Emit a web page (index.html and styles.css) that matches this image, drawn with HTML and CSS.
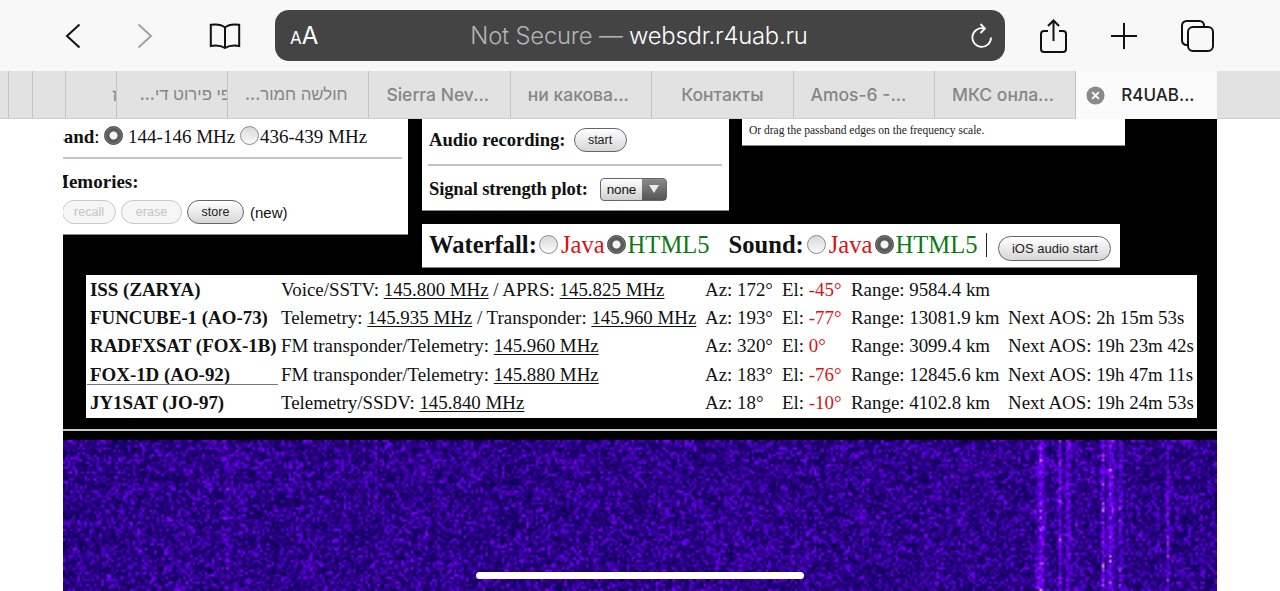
FILE: index.html
```html
<!DOCTYPE html>
<html lang="en">
<head>
  <meta charset="UTF-8">
  <title>websdr.r4uab.ru</title>
  <link rel="stylesheet" href="styles.css">
</head>
<body>
  <header class="toolbar">
    <svg class="icon back" viewBox="0 0 16 26"><path d="M14.5 1.5 2 13l12.5 11.5" /></svg>
    <svg class="icon forward" viewBox="0 0 16 26"><path d="M1.5 1.5 14 13 1.500 24.500" /></svg>
    <svg class="icon book" viewBox="0 0 32 26"><path d="M16 4.500C13 1.800 7 1 1.800 1.800V23c5-.8 10.500-.3 14.200 2 3.700-2.300 9.200-2.800 14.200-2V1.800C25 1 19 1.800 16 4.500ZM16 4.500V25" /></svg>
    <div class="urlbar">
      <span class="aa"><small>A</small>A</span>
      <span class="address"><span class="dim">Not Secure —</span> websdr.r4uab.ru</span>
      <svg class="reload" viewBox="0 0 22 26"><path d="M13 5.500A9.300 9.300 0 1 0 20 14.500M9.500 1 14 5.500 9.500 10" /></svg>
    </div>
    <svg class="icon share" viewBox="0 0 27 34"><path d="M8 12H4a3 3 0 0 0-3 3v15a3 3 0 0 0 3 3h19a3 3 0 0 0 3-3V15a3 3 0 0 0-3-3h-4M13.500 22V1.500M8 7l5.500-5.500L19 7" /></svg>
    <svg class="icon plus" viewBox="0 0 26 26"><path d="M13 0v26M0 13h26" /></svg>
    <svg class="icon tabs-icon" viewBox="0 0 33 32"><rect x="7" y="7" width="25" height="24" rx="5" /><path d="M7 25H5.500A4.500 4.500 0 0 1 1 20.500V5.500A4.500 4.500 0 0 1 5.500 1h13A4.500 4.500 0 0 1 23 5.500V7" /></svg>
  </header>

  <nav class="tabs">
    <div class="tab stub w9"></div>
    <div class="tab stub w24"></div>
    <div class="tab stub w33"></div>
    <div class="tab stub w51 rtl-end"><span class="fragment" lang="he">ז</span></div>
    <div class="tab narrow rtl-end"><span class="he clipped" lang="he" dir="rtl">פי פירוט די...</span></div>
    <div class="tab wide trunc"><span class="he" lang="he" dir="rtl">חולשה חמור...</span></div>
    <div class="tab wide trunc">Sierra Nev...</div>
    <div class="tab wide trunc">ни какова...</div>
    <div class="tab wide">Контакты</div>
    <div class="tab wide trunc">Amos-6 -...</div>
    <div class="tab wide trunc">МКС онла...</div>
    <div class="tab active">
      <svg class="tab-close" viewBox="0 0 20 20"><circle cx="10" cy="10" r="9.500" /><path d="m6.500 6.500 7 7m0-7-7 7" /></svg>
      <span>R4UAB...</span>
    </div>
  </nav>

  <main class="site">
    <div class="top">
      <section class="panel band-panel">
        <div class="band-row">
          <b>Band</b>: <i class="radio on"></i> 144-146 MHz <i class="radio"></i><span class="tight">436-439 MHz</span>
        </div>
        <hr class="rule">
        <div class="mem-title"><b>Memories:</b></div>
        <div class="mem-row">
          <button class="btn off recall">recall</button>
          <button class="btn off erase">erase</button>
          <button class="btn store">store</button>
          <span class="mem-new">(new)</span>
        </div>
      </section>

      <div class="top-right">
        <div class="top-right-row">
          <section class="panel rec-panel">
            <div class="rec-row"><b>Audio recording:</b> <button class="btn start">start</button></div>
            <hr class="rule">
            <div class="rec-row plot"><b>Signal strength plot:</b>
              <span class="select">none<span class="select-arrow"></span></span>
            </div>
          </section>
          <section class="panel hint-panel">Or drag the passband edges on the frequency scale.</section>
        </div>
        <section class="panel engine-bar">
          <b>Waterfall:</b><i class="radio"></i><span class="red">Java</span><i class="radio on"></i><span class="green">HTML5</span>
          <b class="sound">Sound:</b><i class="radio"></i><span class="red">Java</span><i class="radio on"></i><span class="green">HTML5</span>
          <span class="bar-sep"></span>
          <button class="btn ios">iOS audio start</button>
        </section>
      </div>
    </div>

    <div class="sats-box">
      <table class="sats">
        <colgroup>
          <col class="c-name"><col class="c-desc"><col class="c-az"><col class="c-el"><col class="c-range"><col class="c-aos">
        </colgroup>
        <tr>
          <th>ISS (ZARYA)</th>
          <td>Voice/SSTV: <u>145.800 MHz</u> / APRS: <u>145.825 MHz</u></td>
          <td>Az: 172°</td><td>El: <span class="red">-45°</span></td><td>Range: 9584.4 km</td><td></td>
        </tr>
        <tr>
          <th>FUNCUBE-1 (AO-73)</th>
          <td>Telemetry: <u>145.935 MHz</u> / Transponder: <u>145.960 MHz</u></td>
          <td>Az: 193°</td><td>El: <span class="red">-77°</span></td><td>Range: 13081.9 km</td><td>Next AOS: 2h 15m 53s</td>
        </tr>
        <tr>
          <th>RADFXSAT (FOX-1B)</th>
          <td>FM transponder/Telemetry: <u>145.960 MHz</u></td>
          <td>Az: 320°</td><td>El: <span class="red">0°</span></td><td>Range: 3099.4 km</td><td>Next AOS: 19h 23m 42s</td>
        </tr>
        <tr>
          <th class="lined">FOX-1D (AO-92)</th>
          <td>FM transponder/Telemetry: <u>145.880 MHz</u></td>
          <td>Az: 183°</td><td>El: <span class="red">-76°</span></td><td>Range: 12845.6 km</td><td>Next AOS: 19h 47m 11s</td>
        </tr>
        <tr>
          <th>JY1SAT (JO-97)</th>
          <td>Telemetry/SSDV: <u>145.840 MHz</u></td>
          <td>Az: 18°</td><td>El: <span class="red">-10°</span></td><td>Range: 4102.8 km</td><td>Next AOS: 19h 24m 53s</td>
        </tr>
      </table>
    </div>

    <div class="divider"></div>
    <canvas id="waterfall" class="waterfall" width="1154" height="151"></canvas>
  </main>

  <div class="home-indicator"></div>
  <script src="waterfall.js"></script>
</body>
</html>
```

FILE: styles.css
```css
html, body {
  margin: 0;
  height: 591px;
  overflow: hidden;
  background: #fff;
}
body {
  font-family: "Liberation Serif", serif;
  color: #111;
}

/* safari toolbar */
.toolbar {
  height: 71px;
  background: #f8f8f8;
  display: flex;
  align-items: center;
  font-family: Inter, Roboto, "Liberation Sans", sans-serif;
}
.icon {
  flex: none;
  fill: none;
  stroke: #111;
  stroke-width: 2;
}
.back { width: 16px; height: 26px; margin-left: 65px; }
.forward { width: 16px; height: 26px; margin-left: 56px; stroke: #a2a2a2; }
.book { width: 32px; height: 26px; margin-left: 56px; }
.urlbar {
  width: 730px;
  height: 51px;
  margin-left: 34px;
  flex: none;
  box-sizing: border-box;
  padding: 0 12px 0 15px;
  background: #444;
  border-radius: 14px;
  color: #fff;
  display: flex;
  align-items: center;
}
.aa { width: 60px; font-size: 24px; }
.aa small { font-size: 17px; }
.address {
  flex: 1;
  text-align: center;
  font-size: 23.800px;
  font-weight: 300;
  letter-spacing: -0.2px;
  padding-right: 43px;
}
.dim { color: #b4b4b4; }
.reload {
  width: 22px;
  height: 26px;
  fill: none;
  stroke: #fff;
  stroke-width: 1.8;
}
.share { width: 27px; height: 34px; margin-left: 35px; }
.plus { width: 26px; height: 26px; margin-left: 44px; }
.tabs-icon { width: 33px; height: 32px; margin-left: 44px; }

/* tab strip */
.tabs {
  height: 47px;
  background: #e2e2e2;
  border-bottom: 1px solid #cfcfcf;
  display: flex;
  font-family: Inter, Roboto, "Liberation Sans", "DejaVu Sans", sans-serif;
  font-size: 17.500px;
  font-weight: 500;
  color: #868686;
}
.tab {
  flex: none;
  box-sizing: border-box;
  border-right: 1px solid #c4c4c4;
  display: flex;
  align-items: center;
  justify-content: center;
  overflow: hidden;
  white-space: nowrap;
}
.w9 { width: 9px; }
.w24 { width: 24px; }
.w33 { width: 33px; }
.w51 { width: 51px; }
.narrow { width: 111px; }
.wide { width: 141.400px; }
.trunc { justify-content: flex-start; padding-left: 17px; }
.rtl-end { justify-content: flex-end; }
.he { font-size: 16.800px; }
.clipped { margin-right: -4px; }
.fragment { margin-right: -2px; }
.active {
  width: 140.600px;
  height: 48px;
  border-right: 0;
  background: #fbfbfb;
  color: #222;
  font-size: 17px;
  justify-content: flex-start;
  padding-left: 10px;
  gap: 16px;
}
.tab-close { width: 19px; height: 19px; }
.tab-close circle { fill: #8a8a8a; }
.tab-close path { stroke: #fbfbfb; stroke-width: 2; fill: none; }

/* websdr page */
.site {
  width: 1154px;
  height: 472px;
  margin-left: 63px;
  background: #000;
  overflow: hidden;
}
.top { display: flex; height: 149px; }
.panel {
  background: #fff;
  border-bottom: 1px solid #888;
  box-sizing: border-box;
  overflow: hidden;
  font-size: 19px;
  white-space: nowrap;
}
.band-panel { width: 345px; height: 116px; flex: none; }
.band-row { margin: 6px 0 0 -12px; height: 24px; line-height: 24px; }
.tight { margin-left: 1px; }
.rule {
  border: 0;
  height: 2px;
  background: #c4c4c4;
  margin: 0;
}
.band-panel .rule { margin: 8px 6px 0 0; }
.mem-title { margin: 11px 0 0 -12px; line-height: 24px; }
.mem-row {
  display: flex;
  align-items: center;
  gap: 5px;
  margin: 6px 0 0 -1px;
}
.mem-new { font: 15px "Liberation Sans", sans-serif; margin-left: 1px; }

.radio {
  display: inline-block;
  width: 19px;
  height: 19px;
  box-sizing: border-box;
  border-radius: 50%;
  border: 1px solid #8c8c8c;
  background: linear-gradient(#d8d8d8, #fbfbfb);
  vertical-align: -2px;
}
.radio.on {
  border-color: #444;
  background: radial-gradient(circle at 50% 50%, #f4f4f4 0 3.500px, #5a5a5a 4.500px 7px, #777 8px);
}

.btn {
  height: 24px;
  padding: 0;
  border: 1px solid #666;
  border-radius: 12px;
  background: linear-gradient(#fff, #d6d6d6);
  font: 12.500px "Liberation Sans", sans-serif;
  color: #222;
}
.btn.off {
  border-color: #c8c8c8;
  background: #f6f6f6;
  color: #c4c4c4;
}
.recall { width: 54px; }
.erase { width: 61px; }
.store { width: 57px; }
.start { width: 53px; margin-left: 4px; }
.ios { width: 113px; height: 25px; border-radius: 13px; font-size: 13px; flex: none; margin-top: 7px; }

.top-right { margin-left: 14px; width: 703px; }
.top-right-row { display: flex; align-items: flex-start; gap: 13px; height: 105px; }
.rec-panel { width: 307px; height: 92px; flex: none; padding: 0 7px 0 7px; font-size: 18.600px; }
.rec-row { display: flex; align-items: center; gap: 4px; height: 24px; margin-top: 9px; }
.rec-panel .rule { margin: 12px 0 0 -1px; }
.rec-row.plot { margin-top: 11px; gap: 12px; letter-spacing: -0.15px; }
.select {
  position: relative;
  width: 67px;
  height: 23px;
  box-sizing: border-box;
  padding-left: 6px;
  border: 1px solid #666;
  border-radius: 4px;
  background: linear-gradient(#fff, #d0d0d0);
  font: 13.500px/21px "Liberation Sans", sans-serif;
}
.select-arrow {
  position: absolute;
  top: 0;
  right: 0;
  width: 24px;
  height: 21px;
  background: linear-gradient(#8a8a8a, #555);
}
.select-arrow::after {
  content: "";
  position: absolute;
  left: 7px;
  top: 6px;
  border: 5px solid transparent;
  border-top: 8px solid #eee;
  border-bottom: 0;
}
.hint-panel {
  width: 383px;
  height: 27px;
  flex: none;
  padding: 4px 0 0 7px;
  font-size: 11.500px;
  line-height: 14px;
  color: #222;
}
.engine-bar {
  width: 698px;
  height: 44px;
  display: flex;
  align-items: center;
  padding: 0 0 2px 7px;
  font-size: 24.600px;
  line-height: 40px;
}
.engine-bar .radio { margin: 0 3px 0 2px; flex: none; }
.engine-bar .radio.on { margin-right: 2px; }
.sound { margin: 0 1px 0 19px; }
.bar-sep {
  width: 1px;
  height: 24px;
  background: #222;
  margin: 0 11px 0 9px;
  flex: none;
}
.red { color: #e01010; }
.green { color: #0c7a12; }

.sats-box {
  width: 1111px;
  height: 143px;
  margin: 7px 0 0 23px;
  box-sizing: border-box;
  padding-top: 1px;
  background: #fff;
}
.sats {
  width: 100%;
  height: 141px;
  border-collapse: collapse;
  table-layout: fixed;
  font-size: 18.900px;
  white-space: nowrap;
}
.sats th, .sats td { padding: 0; text-align: left; height: 28px; line-height: 28px; }
.sats th { padding-left: 4px; font-weight: bold; }
.sats th.lined { position: relative; }
.sats th.lined::after {
  content: "";
  position: absolute;
  left: 1px;
  width: 191px;
  bottom: 4px;
  height: 1px;
  background: #778;
}
.sats u { text-underline-offset: 2px; }
.c-name { width: 195px; }
.c-desc { width: 424px; }
.c-az { width: 77px; }
.c-el { width: 69px; }
.c-range { width: 157px; }

.divider {
  height: 2px;
  margin-top: 11px;
  background: #c8c8c8;
}
.waterfall { display: block; margin-top: 9px; }

.home-indicator {
  position: absolute;
  left: 476px;
  top: 572px;
  width: 328px;
  height: 7px;
  border-radius: 4px;
  background: #fff;
}
```

FILE: waterfall.js
```js
// fake spectrum noise, seeded so every run looks the same
let seed = 12345;
function rnd() {
  seed = (seed * 16807) % 2147483647;
  return seed / 2147483647;
}

// [x, width, strength] of the carriers
const carriers = [
  [162, 3, 0.16], [977, 3, 0.55], [996, 1.5, 0.45], [1004, 2, 0.4], [1014, 1.5, 0.2],
  [1039, 1.5, 0.5], [1047, 3, 0.5], [1057, 1.5, 0.45], [1104, 1.5, 0.36]
];

const canvas = document.getElementById('waterfall');
const ctx = canvas.getContext('2d');
const small = document.createElement('canvas');
small.width = Math.round(canvas.width / 2.4);
small.height = Math.round(canvas.height / 2.4);
const sctx = small.getContext('2d');
const img = sctx.createImageData(small.width, small.height);

for (let y = 0; y < small.height; y++) {
  for (let x = 0; x < small.width; x++) {
    let v = rnd() * rnd() * 0.85 + rnd() * 0.12;
    for (const [cx, w, s] of carriers) {
      const d = (x * 2.4 - cx) / w;
      v += s * Math.exp(-d * d) * (0.5 + rnd());
    }
    const i = (y * small.width + x) * 4;
    img.data[i] = 5 + v * 150;
    img.data[i + 1] = v > 0.95 ? (v - 0.95) * 300 : 0;
    img.data[i + 2] = 70 + v * 260;
    img.data[i + 3] = 255;
  }
}
sctx.putImageData(img, 0, 0);
ctx.imageSmoothingEnabled = true;
ctx.drawImage(small, 0, 0, canvas.width, canvas.height);
```
